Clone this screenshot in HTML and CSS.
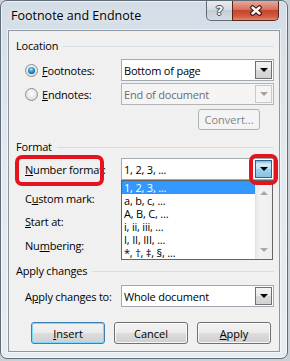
FILE: index.html
```html
<!DOCTYPE html>
<html lang="en">
<head>
  <meta charset="UTF-8">
  <meta name="viewport" content="width=device-width, initial-scale=1.0">
  <title>Footnote and Endnote</title>
  <link rel="stylesheet" href="styles.css">
</head>
<body>
  <div class="window">
    <div class="titlebar">
      <span class="title">Footnote and Endnote</span>
      <div class="caption-buttons">
        <div class="cap-btn help">?</div>
        <div class="cap-btn close">
          <svg width="14" height="11" viewBox="0 0 14 11">
            <path d="M3.5 2.5 L10.5 8.5 M10.5 2.5 L3.5 8.5" stroke="#3b1610" stroke-width="4.6" stroke-linecap="round" fill="none"/>
            <path d="M3.5 2.5 L10.5 8.5 M10.5 2.5 L3.5 8.5" stroke="#ffffff" stroke-width="2.4" stroke-linecap="round" fill="none"/>
          </svg>
        </div>
      </div>
    </div>

    <div class="client">
      <div class="group-head head-location"><span>Location</span></div>

      <div class="row row-footnotes">
        <label class="field-label"><span class="radio checked"></span><u>F</u>ootnotes:</label>
        <div class="combo">
          <span class="combo-text">Bottom of page</span>
          <span class="combo-btn"><i class="arrow"></i></span>
        </div>
      </div>

      <div class="row row-endnotes">
        <label class="field-label"><span class="radio"></span><u>E</u>ndnotes:</label>
        <div class="combo disabled">
          <span class="combo-text">End of document</span>
          <span class="combo-btn"><i class="arrow"></i></span>
        </div>
      </div>

      <div class="row row-convert">
        <button class="btn convert" disabled>Convert...</button>
      </div>

      <div class="group-head head-format"><span>Format</span></div>

      <div class="row row-number">
        <label class="field-label"><u>N</u>umber format:</label>
        <div class="combo open">
          <span class="combo-text">1, 2, 3, ...</span>
          <span class="combo-btn hot"><i class="arrow"></i></span>
          <div class="dropdown">
            <ul class="items">
              <li class="selected">1, 2, 3, ...</li>
              <li>a, b, c, ...</li>
              <li>A, B, C, ...</li>
              <li>i, ii, iii, ...</li>
              <li>I, II, III, ...</li>
              <li>*, †, ‡, §, ...</li>
            </ul>
            <div class="scrollbar">
              <i class="sb-arrow up"></i>
              <i class="sb-arrow down"></i>
            </div>
          </div>
        </div>
        <div class="mark mark-label"></div>
        <div class="mark mark-button"></div>
      </div>

      <div class="row row-custom">
        <label class="field-label">C<u>u</u>stom mark:</label>
      </div>
      <div class="row row-start">
        <label class="field-label"><u>S</u>tart at:</label>
      </div>
      <div class="row row-numbering">
        <label class="field-label">Nu<u>m</u>bering:</label>
      </div>

      <div class="group-head head-apply"><span>Apply changes</span></div>

      <div class="row row-apply">
        <label class="field-label">A<u>p</u>ply changes to:</label>
        <div class="combo">
          <span class="combo-text">Whole document</span>
          <span class="combo-btn"><i class="arrow"></i></span>
        </div>
      </div>

      <div class="buttons">
        <button class="btn default"><u>I</u>nsert</button>
        <button class="btn">Cancel</button>
        <button class="btn"><u>A</u>pply</button>
      </div>
    </div>
  </div>
</body>
</html>
```

FILE: styles.css
```css
body {
  margin: 0;
  background: #c9d0d6;
  font-family: 'Open Sans', 'Noto Sans', sans-serif;
  font-size: 11px;
  letter-spacing: -0.2px;
  color: #000;
}
.window {
  box-sizing: border-box;
  width: 288px;
  height: 359px;
  border: 1px solid #5f6b76;
  border-radius: 7px;
  background: linear-gradient(to bottom, #d3dde6, #e2e8ee 40%, #e7ecf1);
  box-shadow: inset 0 0 0 1px rgba(255,255,255,0.6);
}
.titlebar {
  display: flex;
  align-items: flex-start;
  height: 29px;
  padding: 0 8px 0 10px;
}
.title {
  padding-top: 7px;
  line-height: 16px;
  font-size: 12.5px;
  letter-spacing: 0;
  text-shadow: 0 0 6px rgba(255,255,255,0.9);
}
.caption-buttons {
  display: flex;
  margin-left: auto;
}
.cap-btn {
  box-sizing: border-box;
  height: 20px;
  border: 1px solid #5f6b78;
  border-top: none;
  display: flex;
  align-items: center;
  justify-content: center;
}
.help {
  width: 27px;
  border-radius: 0 0 0 5px;
  background: linear-gradient(to bottom, #e9edf1, #d3dae1 50%, #c3ccd5 50%, #d6dde4);
  color: #f4f6f8;
  font-family: 'DejaVu Sans', sans-serif;
  font-weight: bold;
  font-size: 13px;
  text-shadow: 0 0 1px #39434d, 1px 0 0 #4a535c, -1px 0 0 #4a535c, 0 1px 0 #4a535c, 0 -1px 0 #4a535c;
}
.close {
  width: 47px;
  margin-left: -1px;
  border-color: #5b2418;
  border-radius: 0 0 5px 0;
  background: linear-gradient(to bottom, #e9a898, #d3735f 45%, #c4442c 50%, #d05a40 80%, #e08a6e);
}
.client {
  box-sizing: border-box;
  width: 272px;
  height: 322px;
  margin: 0 7px;
  padding: 0 5px 0 7px;
  background: #f0f0f0;
  border: 1px solid #8d98a3;
  box-shadow: 0 0 0 1px rgba(255,255,255,0.55);
}
.group-head {
  display: flex;
  align-items: center;
  line-height: 16px;
}
.group-head::after {
  content: '';
  flex: 1;
  height: 1px;
  margin-left: 5px;
  background: #d5dde5;
}
.head-location { margin-top: 7px; }
.head-format { margin-top: 9px; }
.head-apply { margin-top: 7px; }
.row {
  display: flex;
  align-items: center;
  height: 22px;
  padding-left: 9px;
  position: relative;
}
.row-footnotes { margin-top: 5px; }
.row-endnotes { margin-top: 2px; }
.row-convert {
  margin-top: 4px;
  height: 21px;
  justify-content: flex-end;
  padding-right: 14px;
}
.row-number { margin-top: 3px; }
.row-custom { margin-top: 7px; }
.row-start { margin-top: 1px; }
.row-numbering { margin-top: 2px; }
.row-apply { margin-top: 6px; }
.field-label {
  display: flex;
  align-items: center;
  width: 96px;
  flex: none;
  white-space: nowrap;
}
.radio {
  box-sizing: border-box;
  width: 13px;
  height: 13px;
  margin-right: 4px;
  border-radius: 50%;
  border: 1px solid #8c8e90;
  background: radial-gradient(circle at 50% 40%, #ffffff, #e4e4e4 60%, #cfd0d1);
  position: relative;
}
.radio.checked::after {
  content: '';
  position: absolute;
  left: 2px;
  top: 2px;
  width: 7px;
  height: 7px;
  border-radius: 50%;
  background: radial-gradient(circle at 45% 35%, #a9ecff 0, #3ba4dc 35%, #0d4f8f 80%, #093a6c);
}
.combo {
  flex: 1;
  box-sizing: border-box;
  height: 22px;
  display: flex;
  align-items: center;
  background: #fff;
  border: 1px solid #a2a9b1;
  position: relative;
}
.combo-text {
  flex: 1;
  padding-left: 2px;
  white-space: nowrap;
}
.combo-btn {
  box-sizing: border-box;
  width: 17px;
  height: 18px;
  margin-right: 1px;
  border: 1px solid #707070;
  background: linear-gradient(to bottom, #f4f4f4, #e9e9e9 50%, #dadada 50%, #d2d2d2);
  display: flex;
  align-items: center;
  justify-content: center;
}
.arrow {
  width: 0;
  height: 0;
  border-left: 4px solid transparent;
  border-right: 4px solid transparent;
  border-top: 4px solid #000;
  margin-top: -1px;
}
.combo.disabled {
  background: #f4f4f4;
  border-color: #b5b5b5;
  color: #6d6d6d;
}
.combo.disabled .combo-btn {
  background: #f4f4f4;
  border-color: #c9c9c9;
}
.combo.disabled .arrow {
  border-top-color: #a2a2a2;
}
.combo-btn.hot {
  border-color: #2c628b;
  background: linear-gradient(to bottom, #7fb6dc, #d4ecf9 20%, #b8dff4 50%, #a0d2ee 50%, #86c3e6);
}
.dropdown {
  position: absolute;
  left: -1px;
  top: 21px;
  box-sizing: border-box;
  width: 152px;
  height: 80px;
  background: #fff;
  border: 1px solid #646464;
  display: flex;
  z-index: 2;
}
.items {
  flex: 1;
  margin: 0;
  padding: 0;
  list-style: none;
}
.items li {
  box-sizing: border-box;
  height: 13px;
  line-height: 13px;
  padding-left: 2px;
  white-space: nowrap;
  overflow: hidden;
}
.items li.selected {
  background: #3399ff;
  color: #fff;
  border: 1px dotted #cc6600;
  padding-left: 1px;
  line-height: 11px;
}
.scrollbar {
  width: 17px;
  background: linear-gradient(to right, #e9e9e9, #f3f3f3 30%, #eeeeee);
  border-left: 1px solid #e2e2e2;
  box-sizing: border-box;
  display: flex;
  flex-direction: column;
  justify-content: space-between;
  align-items: center;
  padding: 10px 0 7px;
}
.sb-arrow {
  width: 0;
  height: 0;
  border-left: 4px solid transparent;
  border-right: 4px solid transparent;
}
.sb-arrow.up { border-bottom: 4px solid #a8a8a8; }
.sb-arrow.down { border-top: 4px solid #a8a8a8; }
.mark {
  position: absolute;
  box-sizing: border-box;
  border: 4px solid #e3141e;
  border-radius: 7px;
  z-index: 3;
}
.mark-label {
  left: -1px;
  top: -3px;
  width: 89px;
  height: 31px;
}
.mark-button {
  left: 233px;
  top: -4px;
  width: 29px;
  height: 31px;
}
.buttons {
  display: flex;
  gap: 9px;
  margin-top: 15px;
  padding-left: 15px;
}
.btn {
  box-sizing: border-box;
  width: 74px;
  height: 22px;
  padding: 0;
  font: inherit;
  color: #000;
  border: 1px solid #707070;
  border-radius: 3px;
  background: linear-gradient(to bottom, #f2f2f2, #ebebeb 50%, #dddddd 50%, #cfcfcf);
  box-shadow: inset 0 0 0 1px rgba(255,255,255,0.8);
}
.btn.default {
  border-color: #3c7fb1;
  box-shadow: inset 0 0 0 1px #7fd9f8;
}
.btn.convert {
  width: 62px;
  height: 21px;
  color: #838383;
  border-color: #adb2b5;
  background: #f4f4f4;
  box-shadow: none;
}
```
